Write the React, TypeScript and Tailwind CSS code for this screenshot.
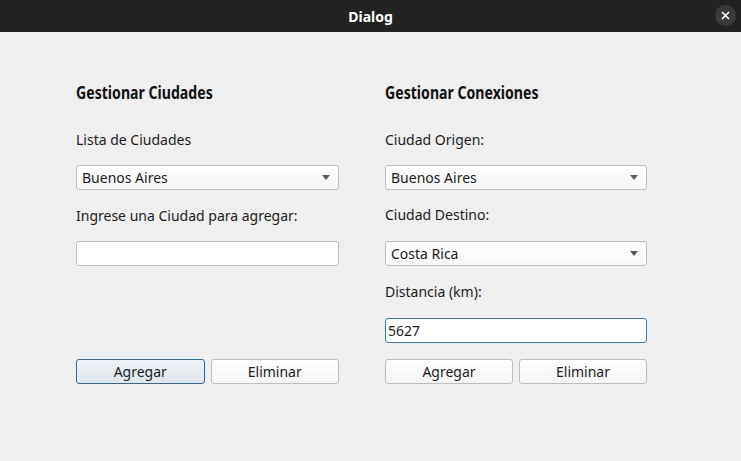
import React from "react";

const ui = "font-['Noto_Sans','DejaVu_Sans',sans-serif]";

const Caret = () => (
  <svg width="8" height="5" viewBox="0 0 8 5" className="shrink-0">
    <path d="M0 0h8L4 5z" fill="#5a5a5a" />
  </svg>
);

const Combo = ({ value }: { value: string }) => (
  <div className="flex h-[25px] w-full items-center justify-between rounded-[3px] border border-[#bdbdbd] bg-gradient-to-b from-white to-[#f6f6f6] pl-[5px] pr-[8px] text-[14px] text-[#1c1c1c]">
    <span>{value}</span>
    <Caret />
  </div>
);

const Field = ({ value, focused }: { value?: string; focused?: boolean }) => (
  <div
    className={
      focused
        ? "flex h-[25px] w-full items-center rounded-[3px] border border-[#3b7bb4] bg-white pl-[2px] text-[14px] text-[#1c1c1c]"
        : "flex h-[25px] w-full items-center rounded-[3px] border border-[#bdbdbd] bg-white pl-[2px] text-[14px] text-[#1c1c1c]"
    }
  >
    {value}
  </div>
);

const Button = ({ label, focused }: { label: string; focused?: boolean }) => (
  <div
    className={
      focused
        ? "flex h-[25px] flex-1 items-center justify-center rounded-[3px] border border-[#2f6b9a] bg-gradient-to-b from-[#eef2f5] to-[#dfe6ec] text-[14px] text-[#1c1c1c]"
        : "flex h-[25px] flex-1 items-center justify-center rounded-[3px] border border-[#bdbdbd] bg-gradient-to-b from-white to-[#f4f4f4] text-[14px] text-[#1c1c1c]"
    }
  >
    {label}
  </div>
);

const Heading = ({ text }: { text: string }) => (
  <h2 className="h-6 whitespace-nowrap text-[17px] leading-6 font-bold text-[#111]">
    <span className="inline-block origin-left scale-x-[0.83]">{text}</span>
  </h2>
);

const Label = ({ text }: { text: string }) => (
  <div className="h-5 text-[14px] leading-5 text-[#1c1c1c]">{text}</div>
);

export default function App() {
  return (
    <div className={`flex h-[461px] w-[741px] flex-col bg-[#efefef] ${ui}`}>
      {/* barra de título */}
      <div className="relative flex h-8 shrink-0 items-center justify-center bg-[#222222]">
        <span className="text-[14px] font-bold text-white">Dialog</span>
        <div className="absolute right-[5px] top-[5px] flex h-[21px] w-[21px] items-center justify-center rounded-full bg-[#3a3a3a]">
          <svg width="9" height="9" viewBox="0 0 9 9">
            <path d="M1 1l7 7M8 1l-7 7" stroke="#fff" strokeWidth="1.6" />
          </svg>
        </div>
      </div>

      <div className="flex gap-[46px] pl-[76px] pt-[49px]">
        {/* Ciudades */}
        <div className="flex w-[263px] flex-col">
          <Heading text="Gestionar Ciudades" />
          <div className="mt-[25px]">
            <Label text="Lista de Ciudades" />
          </div>
          <div className="mt-[15px]">
            <Combo value="Buenos Aires" />
          </div>
          <div className="mt-4">
            <Label text="Ingrese una Ciudad para agregar:" />
          </div>
          <div className="mt-[15px]">
            <Field />
          </div>
          <div className="mt-[93px] flex gap-[6px]">
            <Button label="Agregar" focused />
            <Button label="Eliminar" />
          </div>
        </div>

        {/* Conexiones */}
        <div className="flex w-[262px] flex-col">
          <Heading text="Gestionar Conexiones" />
          <div className="mt-[25px]">
            <Label text="Ciudad Origen:" />
          </div>
          <div className="mt-[15px]">
            <Combo value="Buenos Aires" />
          </div>
          <div className="mt-[15px]">
            <Label text="Ciudad Destino:" />
          </div>
          <div className="mt-4">
            <Combo value="Costa Rica" />
          </div>
          <div className="mt-4">
            <Label text="Distancia (km):" />
          </div>
          <div className="mt-4">
            <Field value="5627" focused />
          </div>
          <div className="mt-[16px] flex gap-[6px]">
            <Button label="Agregar" />
            <Button label="Eliminar" />
          </div>
        </div>
      </div>
    </div>
  );
}
